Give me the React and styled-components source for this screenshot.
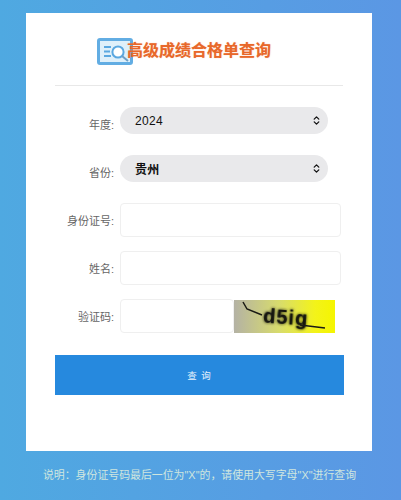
import styled, { createGlobalStyle } from "styled-components";
import { LuChevronsUpDown } from "react-icons/lu";

const GlobalStyle = createGlobalStyle`
  html, body {
    margin: 0;
    padding: 0;
  }
  body {
    font-family: "Liberation Sans", "Noto Sans CJK SC", sans-serif;
  }
`;

const App = () => {
  return (
    <>
      <GlobalStyle />
      <Page>
        <Card>
          <Header>
            <Logo />
            <Title>高级成绩合格单查询</Title>
          </Header>
          <Form>
            <SelectRow label="年度" value="2024" />
            <SelectRow label="省份" value="贵州" bold />
            <InputRow>
              <Label>身份证号:</Label>
              <TextBox />
            </InputRow>
            <InputRow>
              <Label>姓名:</Label>
              <TextBox />
            </InputRow>
            <InputRow>
              <Label>验证码:</Label>
              <CodeBox />
              <Captcha />
            </InputRow>
          </Form>
          <SubmitButton>查 询</SubmitButton>
        </Card>
        <Note>说明：身份证号码最后一位为"X"的，请使用大写字母"X"进行查询</Note>
      </Page>
    </>
  );
};

export default App;

const SelectRow = ({ label, value, bold }) => (
  <Row>
    <Label $low>{label}:</Label>
    <Select>
      <SelectValue $bold={bold}>{value}</SelectValue>
      <LuChevronsUpDown />
    </Select>
  </Row>
);

const Logo = () => (
  <LogoSvg viewBox="0 0 36 27" aria-hidden="true">
    <rect x="1.5" y="1.5" width="33" height="24" rx="1.5" fill="#dff0fa" stroke="#62ade3" strokeWidth="3" />
    <path d="M7 9h7M7 13.5h6M7 18h7" stroke="#5ba8e0" strokeWidth="2" />
    <circle cx="21" cy="14" r="5.6" fill="#fff" stroke="#5ba8e0" strokeWidth="2" />
    <path d="M25 18l6 5" stroke="#6f9fc4" strokeWidth="2" />
  </LogoSvg>
);

const Captcha = () => (
  <CaptchaSvg viewBox="0 0 101 33" aria-hidden="true">
    <defs>
      <linearGradient id="captchaBg" x1="0" x2="1" y1="0" y2="0">
        <stop offset="0" stopColor="#b4b2a4" />
        <stop offset="0.45" stopColor="#d8dc6c" />
        <stop offset="0.8" stopColor="#f3f31a" />
        <stop offset="1" stopColor="#f5f500" />
      </linearGradient>
      <filter id="captchaBlur" x="-20%" y="-50%" width="140%" height="200%">
        <feGaussianBlur stdDeviation="1.8" />
      </filter>
      <filter id="captchaSoft" x="-10%" y="-20%" width="120%" height="140%">
        <feGaussianBlur stdDeviation="0.35" />
      </filter>
    </defs>
    <rect width="101" height="33" fill="url(#captchaBg)" />
    <CaptchaText x="29" y="24" transform="rotate(4 50 20)" filter="url(#captchaBlur)">d5ig</CaptchaText>
    <CaptchaText x="29" y="24" transform="rotate(4 50 20)" filter="url(#captchaSoft)">d5ig</CaptchaText>
    <path d="M9 2L13 9 28 15M66 25L91 28" fill="none" stroke="#1a1a14" strokeWidth="1.5" />
  </CaptchaSvg>
);

const Page = styled.div`
  box-sizing: border-box;
  width: 401px;
  height: 500px;
  padding-top: 13px;
  background: linear-gradient(90deg, #4fa9e1 0%, #5b97e4 100%);
  overflow: hidden;
`;

const Card = styled.div`
  box-sizing: border-box;
  width: 346px;
  height: 438px;
  margin-left: 26px;
  padding: 0 29px;
  background: #fff;
`;

const Header = styled.div`
  display: flex;
  align-items: center;
  height: 73px;
  padding: 4px 0 0 42px;
  box-sizing: border-box;
  border-bottom: 1px solid #e8e8e8;
`;

const LogoSvg = styled.svg`
  flex: none;
  width: 36px;
  height: 27px;
`;

const Title = styled.h1`
  margin: 0 0 5px -6px;
  font-size: 16px;
  font-weight: 700;
  white-space: nowrap;
  color: #e8682a;
  text-shadow: 0 0 1px rgba(232, 104, 42, 0.5);
`;

const Form = styled.div`
  display: flex;
  flex-direction: column;
  gap: 14px;
  padding-top: 21px;
`;

const Row = styled.div`
  display: flex;
  align-items: center;
  height: 27px;
  margin-bottom: 7px;
`;

const InputRow = styled.div`
  display: flex;
  align-items: center;
  height: 34px;
`;

const Label = styled.label`
  flex: none;
  box-sizing: border-box;
  width: 65px;
  padding: ${(props) => (props.$low ? "9px" : "2px")} 6px 0 0;
  font-size: 11px;
  line-height: 14px;
  white-space: nowrap;
  text-align: right;
  color: #666;
`;

const Select = styled.div`
  display: flex;
  align-items: center;
  justify-content: space-between;
  box-sizing: border-box;
  width: 208px;
  height: 27px;
  padding: 0 6px 0 15px;
  background: #e9e9eb;
  border-radius: 14px;
  color: #111;
  font-size: 12px;
  svg {
    width: 11px;
    height: 11px;
    stroke-width: 2.8;
  }
`;

const SelectValue = styled.span`
  font-size: 12px;
  font-weight: ${(props) => (props.$bold ? 700 : 400)};
  letter-spacing: 0.3px;
`;

const TextBox = styled.input`
  box-sizing: border-box;
  width: 221px;
  height: 34px;
  padding: 0 8px;
  background: #fff;
  border: 1px solid #efefef;
  border-radius: 4px;
  outline: none;
`;

const CodeBox = styled(TextBox)`
  width: 114px;
`;

const CaptchaSvg = styled.svg`
  flex: none;
  width: 101px;
  height: 33px;
`;

const CaptchaText = styled.text`
  font-family: "Liberation Sans", sans-serif;
  font-size: 20px;
  font-weight: 700;
  letter-spacing: 1px;
  fill: #141410;
`;

const SubmitButton = styled.button`
  display: block;
  width: 289px;
  height: 40px;
  margin: 22px 0 0;
  padding: 0;
  background: #2689de;
  border: none;
  color: #e8f2fb;
  font-family: inherit;
  font-size: 9.5px;
  letter-spacing: 1px;
`;

const Note = styled.p`
  margin: 17px 0 0;
  padding-right: 2px;
  font-size: 10.9px;
  line-height: 14px;
  text-align: center;
  white-space: nowrap;
  color: #cfe6df;
`;
